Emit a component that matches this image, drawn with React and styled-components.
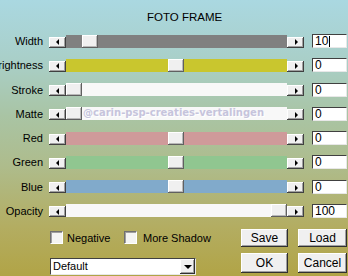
import React from "react";
import styled, { createGlobalStyle } from "styled-components";

const GlobalStyle = createGlobalStyle`
  html, body {
    margin: 0;
    padding: 0;
  }
  #root {
    width: 348px;
    height: 276px;
  }
`;

const Dialog = styled.div`
  width: 348px;
  height: 276px;
  overflow: hidden;
  box-sizing: border-box;
  display: flex;
  flex-direction: column;
  font-family: "Liberation Sans", Arial, sans-serif;
  font-size: 11px;
  color: #000;
  background: linear-gradient(
    to bottom,
    #aad8e1 0%,
    #a9cfc8 22%,
    #a9c4a4 42%,
    #aebc8c 60%,
    #b3ad62 82%,
    #b1a446 100%
  );
`;

const Title = styled.div`
  height: 34px;
  box-sizing: border-box;
  padding: 10px 0 0 147px;
  font-size: 11.5px;
  line-height: 14px;
  white-space: nowrap;
`;

const Rows = styled.div`
  display: flex;
  flex-direction: column;
  gap: 10.28px;
`;

const Row = styled.div`
  display: flex;
  align-items: center;
  height: 14px;
`;

const Label = styled.div`
  width: 43px;
  flex: none;
  display: flex;
  justify-content: flex-end;
  white-space: nowrap;
  margin-right: 6px;
  line-height: 14px;
`;

const Slider = styled.div`
  width: 255px;
  height: 13px;
  flex: none;
  display: flex;
  align-items: flex-end;
`;

const ArrowBtn = styled.div`
  width: 17px;
  height: 11px;
  flex: none;
  box-sizing: border-box;
  background: #f0f0f0;
  box-shadow: inset -1px -1px #404040, inset 1px 1px #ffffff,
    inset -2px -2px #a0a0a0;
  display: flex;
  align-items: center;
  justify-content: center;

  &::after {
    content: "";
    width: 0;
    height: 0;
    border-top: 3px solid transparent;
    border-bottom: 3px solid transparent;
    ${(p) =>
      p.$dir === "left"
        ? "border-right: 3px solid #000; margin-right: 1px;"
        : "border-left: 3px solid #000; margin-left: 1px;"}
  }
`;

const Track = styled.div`
  flex: 1;
  height: 13px;
  position: relative;
  background: ${(p) => p.$color};
  overflow: hidden;
`;

const Thumb = styled.div`
  position: absolute;
  top: 0;
  left: ${(p) => p.$pos}px;
  width: 16px;
  height: 13px;
  box-sizing: border-box;
  background: #f0f0f0;
  box-shadow: inset -1px -1px #606060, inset 1px 1px #ffffff,
    inset -2px -2px #b8b8b8;
`;

const Watermark = styled.div`
  position: absolute;
  left: 17px;
  top: -1px;
  font-family: "DejaVu Sans", Verdana, sans-serif;
  font-weight: bold;
  font-size: 10px;
  line-height: 14px;
  color: #c6c4dc;
  white-space: nowrap;
  text-shadow: 1px 1px 0 #ffffff;
`;

const ValueBox = styled.div`
  width: 35px;
  height: 14px;
  margin-left: 8px;
  flex: none;
  box-sizing: border-box;
  background: #fff;
  border: 1px solid;
  border-color: #404040 #e8e8e8 #e8e8e8 #404040;
  font-size: 12px;
  line-height: 12px;
  padding-left: 2px;
  display: flex;
  align-items: center;
`;

const Caret = styled.span`
  display: inline-block;
  width: 1px;
  height: 11px;
  background: #000;
  margin-left: 1px;
`;

const Bottom = styled.div`
  margin-top: 11px;
  padding-left: 50px;
  display: grid;
  grid-template-columns: 181px 47px 49px;
  grid-template-rows: 18px 22px;
  column-gap: 10px;
  row-gap: 6px;
`;

const Checks = styled.div`
  display: flex;
  align-items: center;
`;

const CheckItem = styled.label`
  display: flex;
  align-items: center;
  width: ${(p) => (p.$w ? `${p.$w}px` : "auto")};
  flex: none;
  white-space: nowrap;
`;

const CheckBox = styled.span`
  width: 13px;
  height: 13px;
  box-sizing: border-box;
  flex: none;
  background: #f4f4f2;
  border: 1px solid;
  border-color: #707070 #ffffff #ffffff #707070;
  box-shadow: inset 1px 1px #a0a0a0;
  margin-right: 4px;
`;

const Button = styled.div`
  height: ${(p) => p.$h}px;
  align-self: start;
  box-sizing: border-box;
  background: #f0f0f0;
  box-shadow: inset -1px -1px #303030, inset 1px 1px #ffffff,
    inset -2px -2px #a0a0a0;
  display: flex;
  align-items: center;
  justify-content: center;
  font-size: 12px;
`;

const Select = styled.div`
  width: 146px;
  height: 17px;
  align-self: end;
  box-sizing: border-box;
  background: #fff;
  border: 1px solid;
  border-color: #404040 #e8e8e8 #e8e8e8 #404040;
  display: flex;
  align-items: center;
  justify-content: space-between;
  padding-left: 2px;
  font-size: 11px;
`;

const DropBtn = styled.div`
  width: 15px;
  height: 15px;
  box-sizing: border-box;
  background: #f0f0f0;
  box-shadow: inset -1px -1px #303030, inset 1px 1px #ffffff,
    inset -2px -2px #a0a0a0;
  display: flex;
  align-items: center;
  justify-content: center;

  &::after {
    content: "";
    border-left: 4px solid transparent;
    border-right: 4px solid transparent;
    border-top: 4px solid #000;
    margin-top: 1px;
  }
`;

const sliders = [
  { label: "Width", color: "#808080", pos: 16, value: "10", caret: true },
  { label: "Brightness", color: "#c9c62e", pos: 102, value: "0" },
  { label: "Stroke", color: "#f8f8f8", pos: 0, value: "0" },
  { label: "Matte", color: "#f8f8f8", pos: 0, value: "0", mark: true },
  { label: "Red", color: "#cf9a9a", pos: 102, value: "0" },
  { label: "Green", color: "#90c690", pos: 102, value: "0" },
  { label: "Blue", color: "#81aacb", pos: 102, value: "0" },
  { label: "Opacity", color: "#f8f8f8", pos: 205, value: "100" },
];

export default function App() {
  return (
    <>
      <GlobalStyle />
      <Dialog>
        <Title>FOTO FRAME</Title>
        <Rows>
          {sliders.map((s) => (
            <Row key={s.label}>
              <Label>{s.label}</Label>
              <Slider>
                <ArrowBtn $dir="left" />
                <Track $color={s.color}>
                  {s.mark && (
                    <Watermark>@carin-psp-creaties-vertalingen</Watermark>
                  )}
                  <Thumb $pos={s.pos} />
                </Track>
                <ArrowBtn $dir="right" />
              </Slider>
              <ValueBox>
                {s.value}
                {s.caret && <Caret />}
              </ValueBox>
            </Row>
          ))}
        </Rows>
        <Bottom>
          <Checks>
            <CheckItem $w={74}>
              <CheckBox />
              Negative
            </CheckItem>
            <CheckItem>
              <CheckBox style={{ marginRight: 6 }} />
              More Shadow
            </CheckItem>
          </Checks>
          <Button $h={18}>Save</Button>
          <Button $h={18}>Load</Button>
          <Select>
            Default
            <DropBtn />
          </Select>
          <Button $h={20}>OK</Button>
          <Button $h={20}>Cancel</Button>
        </Bottom>
      </Dialog>
    </>
  );
}
